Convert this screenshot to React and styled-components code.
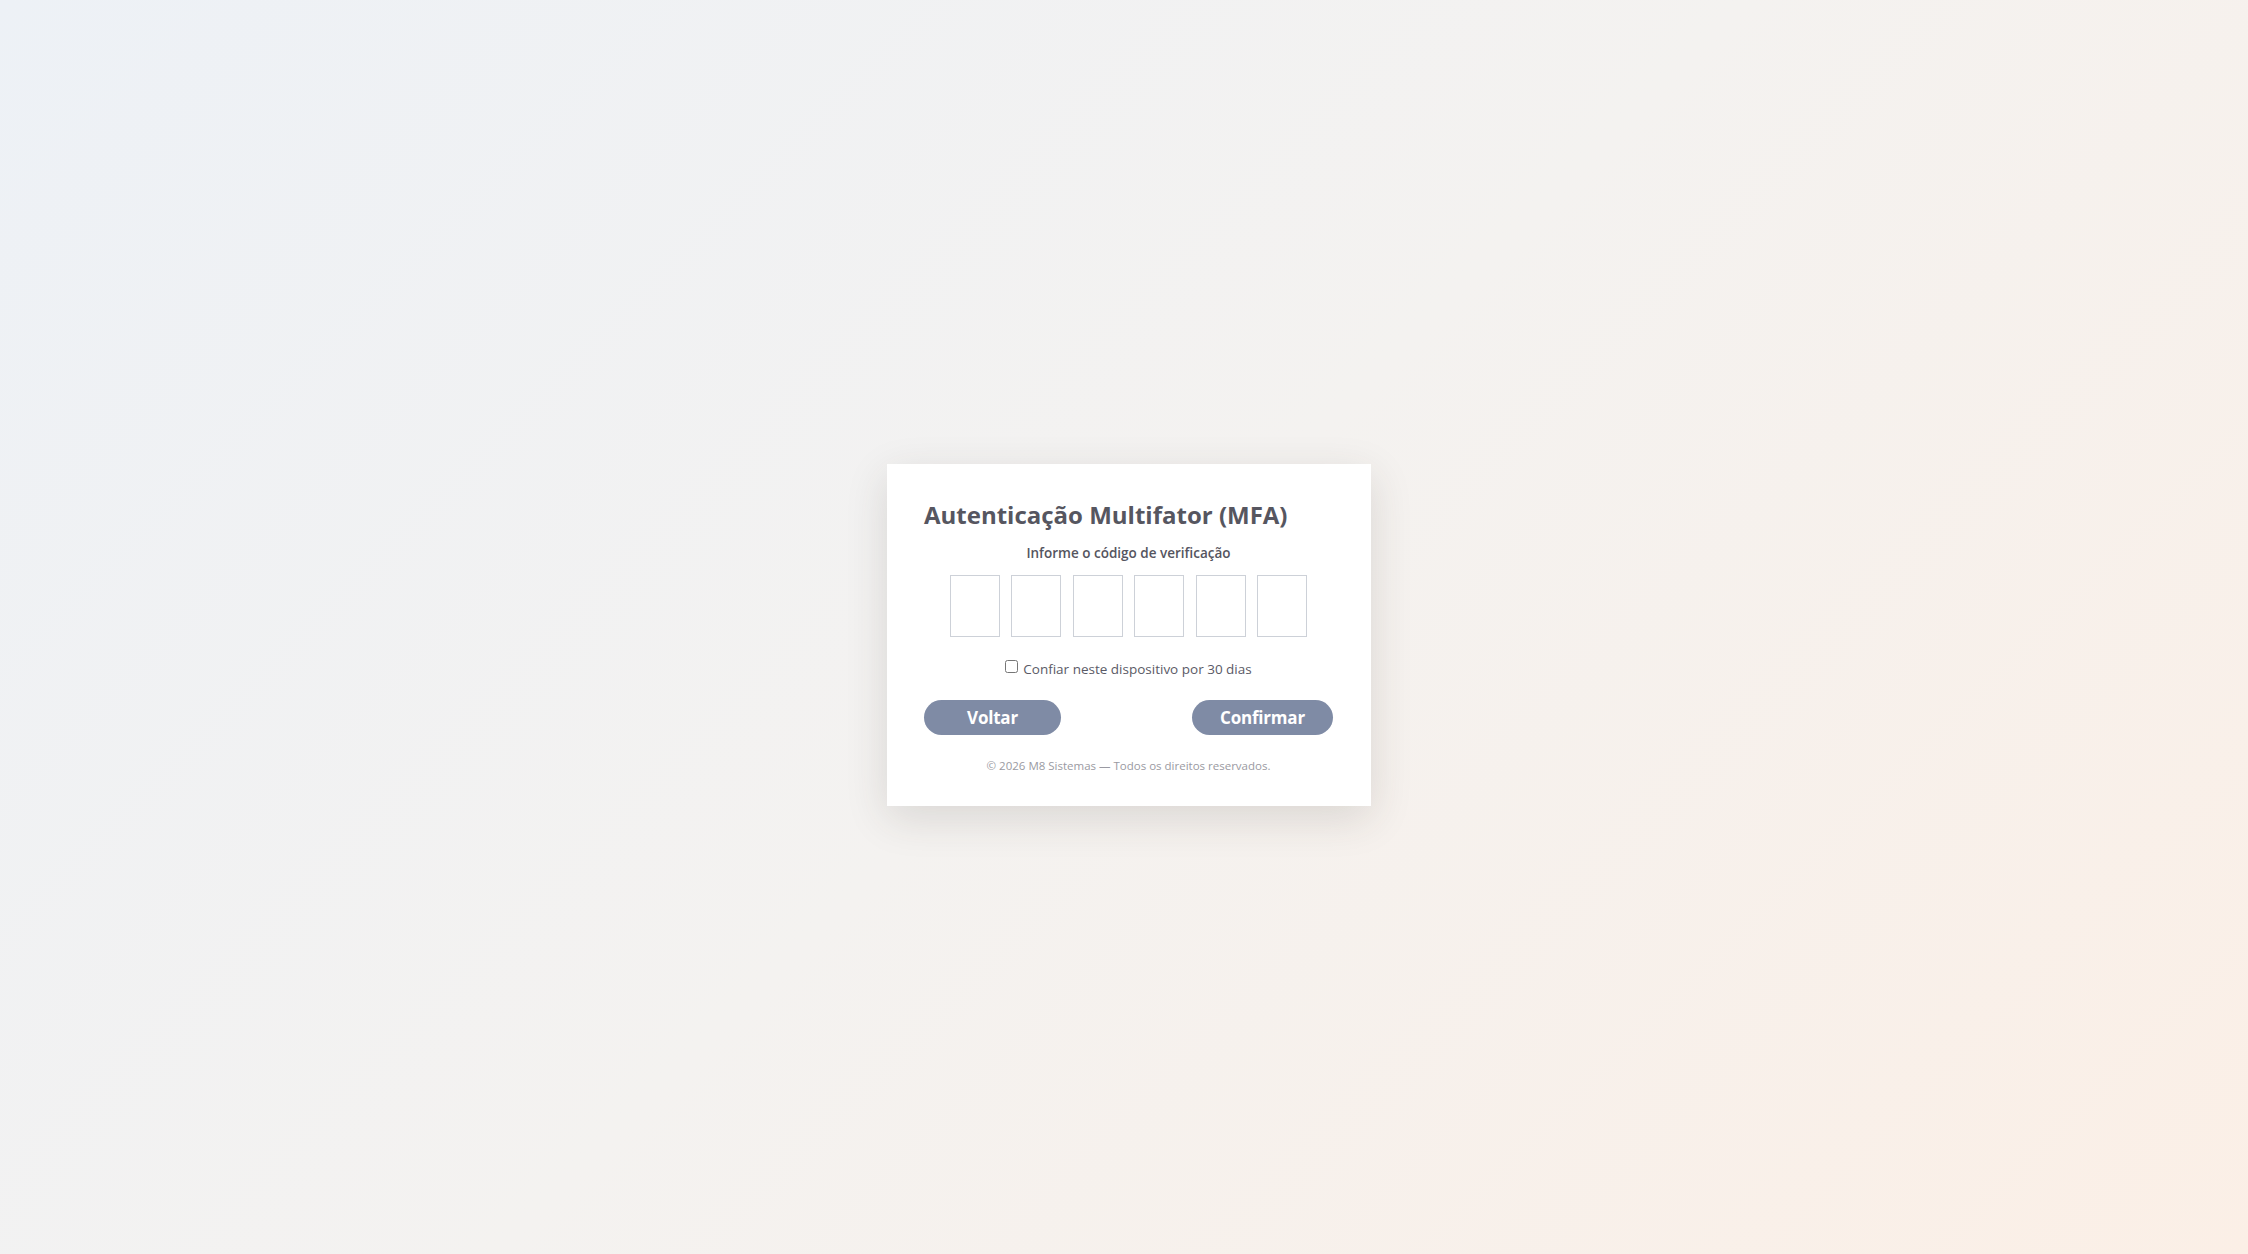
import React, { useRef, useState } from "react";
import styled, { createGlobalStyle } from "styled-components";

const GlobalStyle = createGlobalStyle`
  html, body, #root {
    margin: 0;
    height: 100%;
  }
  body {
    font-family: "Open Sans", "Noto Sans", sans-serif;
    background: linear-gradient(135deg, #edf1f6 0%, #f4f2f0 50%, #fbefe6 100%);
  }
`;

const DIGITS = 6;

const MfaPage = () => {
  const [code, setCode] = useState(Array(DIGITS).fill(""));
  const [trust, setTrust] = useState(false);
  const refs = useRef([]);

  const handleChange = (index, value) => {
    const digit = value.replace(/\D/g, "").slice(-1);
    const updated = [...code];
    updated[index] = digit;
    setCode(updated);
    if (digit && index < DIGITS - 1) {
      refs.current[index + 1]?.focus();
    }
  };

  const handleKeyDown = (index, e) => {
    if (e.key === "Backspace" && !code[index] && index > 0) {
      refs.current[index - 1]?.focus();
    }
  };

  const handleSubmit = (e) => {
    e.preventDefault();
    console.log("MFA code:", code.join(""), "trust:", trust);
  };

  return (
    <Page>
      <GlobalStyle />
      <Card onSubmit={handleSubmit}>
        <Title>Autenticação Multifator (MFA)</Title>
        <Label htmlFor="mfa-0">Informe o código de verificação</Label>
        <CodeRow>
          {code.map((digit, index) => (
            <DigitInput
              key={index}
              id={`mfa-${index}`}
              ref={(el) => (refs.current[index] = el)}
              inputMode="numeric"
              maxLength={1}
              value={digit}
              onChange={(e) => handleChange(index, e.target.value)}
              onKeyDown={(e) => handleKeyDown(index, e)}
            />
          ))}
        </CodeRow>
        <TrustRow>
          <Checkbox
            type="checkbox"
            checked={trust}
            onChange={() => setTrust(!trust)}
          />
          Confiar neste dispositivo por 30 dias
        </TrustRow>
        <ButtonRow>
          <Button type="button" $width={137}>
            Voltar
          </Button>
          <Button type="submit" $width={141}>
            Confirmar
          </Button>
        </ButtonRow>
        <Footer>© 2026 M8 Sistemas — Todos os direitos reservados.</Footer>
      </Card>
    </Page>
  );
};

const Page = styled.div`
  min-height: 100vh;
  display: flex;
  align-items: center;
  justify-content: center;
  padding: 16px 0 0 10px;
  box-sizing: border-box;
`;

const Card = styled.form`
  width: 484px;
  box-sizing: border-box;
  background: #ffffff;
  padding: 34px 38px 32px 37px;
  display: flex;
  flex-direction: column;
  box-shadow: 0 12px 40px rgba(60, 50, 40, 0.14);
`;

const Title = styled.h1`
  margin: 0;
  font-size: 24px;
  font-weight: 700;
  color: #565660;
  line-height: 33px;
`;

const Label = styled.label`
  margin-top: 13px;
  align-self: center;
  font-size: 13.5px;
  font-weight: 600;
  color: #555560;
  line-height: 19px;
`;

const CodeRow = styled.div`
  margin-top: 12px;
  display: flex;
  justify-content: center;
  gap: 11.5px;
`;

const DigitInput = styled.input`
  width: 50px;
  height: 62px;
  box-sizing: border-box;
  border: 1px solid #cdd1d8;
  border-radius: 0;
  text-align: center;
  font-family: inherit;
  font-size: 24px;
  color: #444;
  outline: none;
  &:focus {
    border-color: #7f8ba5;
  }
`;

const TrustRow = styled.label`
  margin-top: 23px;
  align-self: center;
  display: flex;
  align-items: flex-start;
  gap: 5px;
  font-size: 13.5px;
  color: #5a5a66;
  line-height: 18px;
  cursor: pointer;
`;

const Checkbox = styled.input`
  width: 13px;
  height: 13px;
  margin: 0;
`;

const ButtonRow = styled.div`
  margin-top: 22px;
  display: flex;
  justify-content: space-between;
`;

const Button = styled.button`
  width: ${(p) => p.$width}px;
  height: 35px;
  border: none;
  border-radius: 18px;
  background-color: #7f8ba5;
  color: #ffffff;
  font-family: inherit;
  font-size: 17px;
  font-weight: 700;
  letter-spacing: -0.2px;
  cursor: pointer;
  &:hover {
    background-color: #6e7a94;
  }
`;

const Footer = styled.p`
  margin: 23px 0 0;
  text-align: center;
  font-size: 11.5px;
  color: #9a9aa2;
  line-height: 16px;
`;

export default MfaPage;
